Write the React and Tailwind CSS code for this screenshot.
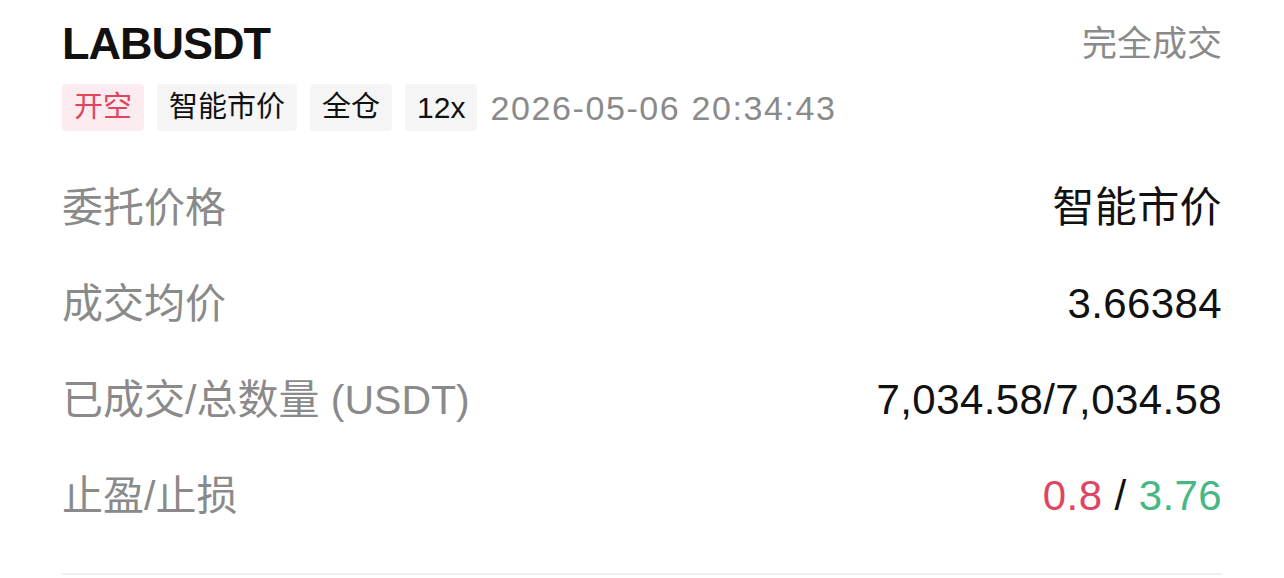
import React from "react";

const font = { fontFamily: '"Liberation Sans", "Noto Sans CJK SC", sans-serif' };

const tags = [
  { label: "开空", className: "bg-[#fdecef] text-[#e0455f]" },
  { label: "智能市价", className: "bg-[#f5f5f5] text-[#111]" },
  { label: "全仓", className: "bg-[#f5f5f5] text-[#111]" },
  { label: "12x", className: "bg-[#f5f5f5] text-[#111] text-[30px]" },
];

const rows = [
  { label: "委托价格", value: <span>智能市价</span> },
  { label: "成交均价", value: <span>3.66384</span> },
  { label: "已成交/总数量 (USDT)", value: <span>7,034.58/7,034.58</span> },
  {
    label: "止盈/止损",
    value: (
      <span>
        <span className="text-[#e0455f]">0.8</span> /{" "}
        <span className="text-[#45b883]">3.76</span>
      </span>
    ),
  },
];

export default function App() {
  return (
    <div className="w-[1284px] h-[578px] bg-white overflow-hidden" style={font}>
      <div className="px-[62px] flex flex-col">
        <div className="mt-[15px] h-[56px] flex items-center justify-between">
          <span className="text-[45px] font-bold text-[#111] tracking-[-1px] leading-none">
            LABUSDT
          </span>
          <span className="text-[35px] text-[#8a8a8a] leading-none">完全成交</span>
        </div>

        <div className="mt-[13px] h-[47px] flex items-center gap-[13px]">
          {tags.map((t) => (
            <span
              key={t.label}
              className={`h-[47px] px-[12px] flex items-center rounded-[4px] text-[29px] leading-none ${t.className}`}
            >
              {t.label}
            </span>
          ))}
          <span className="text-[34px] text-[#8a8a8a] tracking-[1.6px] leading-none">
            2026-05-06 20:34:43
          </span>
        </div>

        <div className="mt-[29px] flex flex-col">
          {rows.map((r) => (
            <div key={r.label} className="h-[96px] flex items-center justify-between">
              <span className="text-[41px] text-[#8a8a8a] leading-none">{r.label}</span>
              <span className="text-[42px] text-[#111] tracking-[0.4px] leading-none">
                {r.value}
              </span>
            </div>
          ))}
        </div>

        <div className="mt-[29px] h-[2px] bg-[#f0f0f0]" />
      </div>
    </div>
  );
}
